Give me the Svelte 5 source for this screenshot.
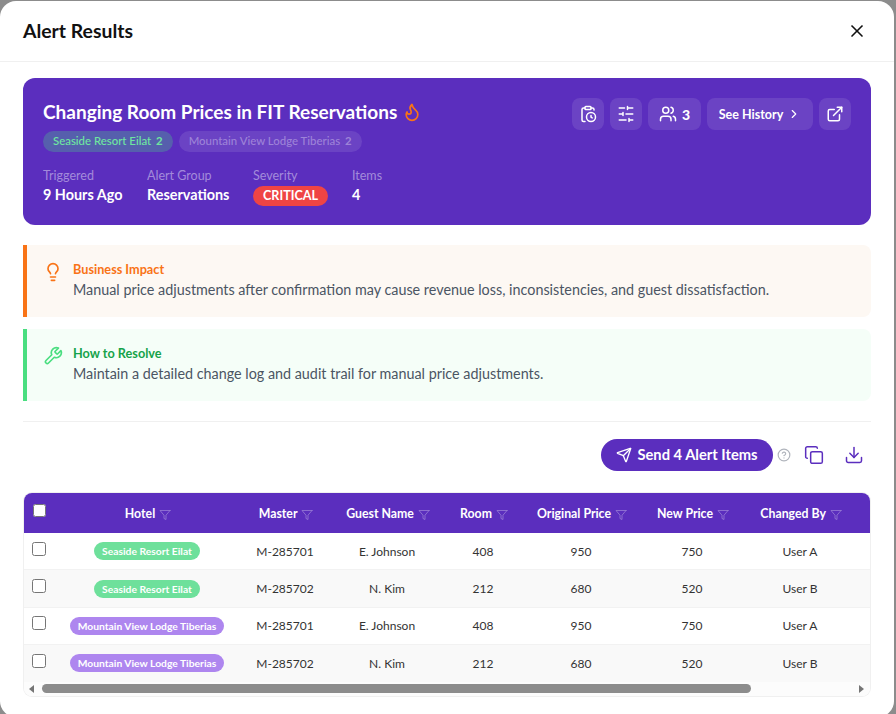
<script>
  const hotels = {
    seaside: { name: 'Seaside Resort Eilat', tone: 'green' },
    mountain: { name: 'Mountain View Lodge Tiberias', tone: 'violet' }
  };

  const columns = ['Hotel', 'Master', 'Guest Name', 'Room', 'Original Price', 'New Price', 'Changed By'];

  const rows = [
    { hotel: hotels.seaside, master: 'M-285701', guest: 'E. Johnson', room: 408, was: 950, now: 750, user: 'User A' },
    { hotel: hotels.seaside, master: 'M-285702', guest: 'N. Kim', room: 212, was: 680, now: 520, user: 'User B' },
    { hotel: hotels.mountain, master: 'M-285701', guest: 'E. Johnson', room: 408, was: 950, now: 750, user: 'User A' },
    { hotel: hotels.mountain, master: 'M-285702', guest: 'N. Kim', room: 212, was: 680, now: 520, user: 'User B' }
  ];

  const meta = [
    { label: 'Triggered', value: '9 Hours Ago' },
    { label: 'Alert Group', value: 'Reservations' },
    { label: 'Severity', badge: 'CRITICAL' },
    { label: 'Items', value: '4' }
  ];
</script>

<div class="backdrop">
  <div class="modal">
    <header class="modal-head">
      <h2>Alert Results</h2>
      <button class="close" aria-label="Close">
        <svg viewBox="0 0 24 24" width="20" height="20"><path d="M18 6 6 18" /><path d="m6 6 12 12" /></svg>
      </button>
    </header>

    <div class="modal-body">
      <section class="hero">
        <div class="hero-main">
          <h1>
            Changing Room Prices in FIT Reservations
            <svg class="flame" viewBox="0 0 24 24" width="20" height="20"><path d="M8.5 14.5A2.5 2.5 0 0 0 11 12c0-1.38-.5-2-1-3-1.072-2.143-.224-4.054 2-6 .5 2.5 2 4.9 4 6.5 2 1.6 3 3.5 3 5.5a7 7 0 1 1-14 0c0-1.153.433-2.294 1-3a2.5 2.5 0 0 0 2.5 2.5z" /></svg>
          </h1>
          <div class="chips">
            <span class="chip on">Seaside Resort Eilat <b>2</b></span>
            <span class="chip">Mountain View Lodge Tiberias <b>2</b></span>
          </div>
          <dl class="meta">
            {#each meta as item}
              <div>
                <dt>{item.label}</dt>
                <dd>
                  {#if item.badge}
                    <span class="badge">{item.badge}</span>
                  {:else}
                    {item.value}
                  {/if}
                </dd>
              </div>
            {/each}
          </dl>
        </div>

        <div class="hero-actions">
          <button class="ghost square" aria-label="Schedule">
            <svg viewBox="0 0 24 24" width="18" height="18"><path d="M16 14v2.2l1.6 1" /><path d="M16 4h2a2 2 0 0 1 2 2v.832" /><path d="M8 4H6a2 2 0 0 0-2 2v14a2 2 0 0 0 2 2h2" /><circle cx="16" cy="16" r="6" /><rect x="8" y="2" width="8" height="4" rx="1" /></svg>
          </button>
          <button class="ghost square" aria-label="Settings">
            <svg viewBox="0 0 24 24" width="18" height="18"><path d="M21 4h-7M10 4H3M21 12h-9M8 12H3M21 20h-5M12 20H3M14 2v4M8 10v4M16 18v4" /></svg>
          </button>
          <button class="ghost users" aria-label="Recipients">
            <svg viewBox="0 0 24 24" width="18" height="18"><path d="M16 21v-2a4 4 0 0 0-4-4H6a4 4 0 0 0-4 4v2" /><circle cx="9" cy="7" r="4" /><path d="M16 3.128a4 4 0 0 1 0 7.744" /><path d="M22 21v-2a4 4 0 0 0-3-3.87" /></svg>
            <span>3</span>
          </button>
          <button class="ghost history">
            See History
            <svg viewBox="0 0 24 24" width="14" height="14"><path d="m9 18 6-6-6-6" /></svg>
          </button>
          <button class="ghost square" aria-label="Open">
            <svg viewBox="0 0 24 24" width="18" height="18"><path d="M15 3h6v6" /><path d="M10 14 21 3" /><path d="M18 13v6a2 2 0 0 1-2 2H5a2 2 0 0 1-2-2V8a2 2 0 0 1 2-2h6" /></svg>
          </button>
        </div>
      </section>

      <section class="note impact">
        <svg viewBox="0 0 24 24" width="20" height="20"><path d="M15 14c.2-1 .7-1.7 1.5-2.5 1-.9 1.5-2.2 1.5-3.5A6 6 0 0 0 6 8c0 1 .2 2.2 1.5 3.5.7.7 1.3 1.5 1.5 2.5" /><path d="M9 18h6" /><path d="M10 22h4" /></svg>
        <div>
          <h3>Business Impact</h3>
          <p>Manual price adjustments after confirmation may cause revenue loss, inconsistencies, and guest dissatisfaction.</p>
        </div>
      </section>

      <section class="note resolve">
        <svg viewBox="0 0 24 24" width="20" height="20"><path d="M14.7 6.3a1 1 0 0 0 0 1.4l1.6 1.6a1 1 0 0 0 1.4 0l3.77-3.77a6 6 0 0 1-7.94 7.94l-6.91 6.91a2.12 2.12 0 0 1-3-3l6.91-6.91a6 6 0 0 1 7.94-7.94l-3.76 3.76z" /></svg>
        <div>
          <h3>How to Resolve</h3>
          <p>Maintain a detailed change log and audit trail for manual price adjustments.</p>
        </div>
      </section>

      <hr />

      <div class="toolbar">
        <button class="send">
          <svg viewBox="0 0 24 24" width="16" height="16"><path d="M14.536 21.686a.5.5 0 0 0 .937-.024l6.5-19a.496.496 0 0 0-.635-.635l-19 6.5a.5.5 0 0 0-.024.937l7.93 3.18a2 2 0 0 1 1.112 1.11z" /><path d="m21.854 2.147-10.94 10.939" /></svg>
          <span>Send 4 Alert Items</span>
        </button>
        <svg class="help" viewBox="0 0 24 24" width="14" height="14"><circle cx="12" cy="12" r="10" /><path d="M9.09 9a3 3 0 0 1 5.83 1c0 2-3 3-3 3" /><path d="M12 17h.01" /></svg>
        <button class="tool copy" aria-label="Copy">
          <svg viewBox="0 0 24 24" width="20" height="20"><rect x="8" y="8" width="14" height="14" rx="2" /><path d="M4 16c-1.1 0-2-.9-2-2V4c0-1.1.9-2 2-2h10c1.1 0 2 .9 2 2" /></svg>
        </button>
        <button class="tool" aria-label="Download">
          <svg viewBox="0 0 24 24" width="20" height="20"><path d="M21 15v4a2 2 0 0 1-2 2H5a2 2 0 0 1-2-2v-4" /><path d="m7 10 5 5 5-5" /><path d="M12 15V3" /></svg>
        </button>
      </div>

      <div class="table-wrap">
        <table>
          <colgroup>
            <col style="width: 30px" /><col style="width: 186px" /><col style="width: 90px" /><col style="width: 114px" />
            <col style="width: 78px" /><col style="width: 118px" /><col style="width: 104px" /><col style="width: 112px" /><col />
          </colgroup>
          <thead>
            <tr>
              <th class="check"><input type="checkbox" aria-label="Select all" /></th>
              {#each columns as col}
                <th>
                  {col}
                  <svg viewBox="0 0 24 24" width="12" height="12"><path d="M22 3H2l8 9.46V19l4 2v-8.54L22 3z" /></svg>
                </th>
              {/each}
              <th></th>
            </tr>
          </thead>
          <tbody>
            {#each rows as row}
              <tr>
                <td class="check"><input type="checkbox" aria-label="Select row" /></td>
                <td><span class="pill {row.hotel.tone}">{row.hotel.name}</span></td>
                <td>{row.master}</td>
                <td>{row.guest}</td>
                <td>{row.room}</td>
                <td>{row.was}</td>
                <td>{row.now}</td>
                <td>{row.user}</td>
                <td></td>
              </tr>
            {/each}
          </tbody>
        </table>
        <div class="scrollbar">
          <span class="arrow left"></span>
          <span class="track"><span class="thumb"></span></span>
          <span class="arrow right"></span>
        </div>
      </div>
    </div>
  </div>
</div>

<style>
  :global(body) {
    margin: 0;
    background: #8c8c8c;
    overflow: hidden;
  }

  .backdrop {
    height: 714px;
    overflow: hidden;
    padding-top: 1px;
    box-sizing: border-box;
    font-family: 'Lato', 'Open Sans', sans-serif;
    color: #1f2937;
  }

  .modal {
    width: 894px;
    height: 716px;
    background: #fff;
    border-radius: 16px;
    overflow: hidden;
  }

  svg {
    fill: none;
    stroke: currentColor;
    stroke-width: 2;
    stroke-linecap: round;
    stroke-linejoin: round;
    flex: none;
    display: block;
  }

  button {
    font-family: inherit;
    border: none;
    background: none;
    padding: 0;
    cursor: pointer;
    color: inherit;
  }

  .modal-head {
    height: 60px;
    display: flex;
    align-items: center;
    justify-content: space-between;
    padding: 0 27px 0 23px;
    border-bottom: 1px solid #f0f0f0;
  }

  h2 {
    margin: -2px 0 0;
    font-size: 19.4px;
    font-weight: 700;
    color: #111;
  }

  .close {
    color: #111;
  }

  .modal-body {
    padding: 16px 23px 0;
  }

  .hero {
    height: 147px;
    box-sizing: border-box;
    padding: 20px;
    display: flex;
    justify-content: space-between;
    background: #5b2ebe;
    border-radius: 12px;
    color: #fff;
  }

  h1 {
    margin: 3px 0 0;
    display: flex;
    align-items: center;
    gap: 5px;
    font-size: 19px;
    line-height: 22px;
    font-weight: 700;
  }

  .flame {
    color: #f97316;
  }

  .chips {
    display: flex;
    gap: 6px;
    margin-top: 8px;
  }

  .chip {
    height: 21px;
    line-height: 20px;
    padding: 0 10px;
    border-radius: 11px;
    font-size: 11.4px;
    font-weight: 500;
    background: rgba(255, 255, 255, 0.1);
    color: rgba(255, 255, 255, 0.35);
  }

  .chip b {
    margin-left: 2px;
    font-weight: 700;
  }

  .chip.on {
    background: rgba(74, 222, 128, 0.28);
    color: #6ee7a0;
  }

  .meta {
    display: grid;
    grid-template-columns: 104px 106px 99px auto;
    margin: 15px 0 0;
  }

  dt {
    font-size: 12.5px;
    line-height: 18px;
    color: rgba(255, 255, 255, 0.45);
  }

  dd {
    margin: 1px 0 0;
    height: 20px;
    line-height: 18px;
    font-size: 14.4px;
    font-weight: 700;
  }

  .badge {
    display: inline-block;
    vertical-align: top;
    height: 20px;
    line-height: 20px;
    padding: 0 10px;
    border-radius: 10px;
    background: #ef4444;
    font-size: 12.6px;
  }

  .hero-actions {
    display: flex;
    gap: 6px;
  }

  .ghost {
    height: 32px;
    display: flex;
    align-items: center;
    justify-content: center;
    border-radius: 8px;
    background: rgba(255, 255, 255, 0.1);
    color: #fff;
  }

  .square {
    width: 32px;
  }

  .users {
    width: 53px;
    gap: 5px;
    font-size: 14px;
    font-weight: 900;
  }

  .history {
    width: 106px;
    gap: 4px;
    font-size: 12.5px;
    font-weight: 700;
  }

  .note {
    height: 72px;
    box-sizing: border-box;
    display: flex;
    gap: 10px;
    padding: 16px;
    border-left: 4px solid;
    border-radius: 0 8px 8px 0;
    margin-top: 12px;
  }

  .note svg {
    margin-top: 1px;
  }

  .impact {
    margin-top: 20px;
    background: #fdf8f3;
    border-color: #f97316;
  }

  .impact svg,
  .impact h3 {
    color: #f97316;
  }

  .resolve {
    background: #f5fef8;
    border-color: #4ade80;
  }

  .resolve svg {
    color: #4ade80;
  }

  .resolve h3 {
    color: #16a34a;
  }

  h3 {
    margin: 0;
    font-size: 12.7px;
    line-height: 16px;
    font-weight: 700;
  }

  p {
    margin: 3px 0 0;
    font-size: 14.35px;
    line-height: 20px;
    color: #4b5563;
  }

  hr {
    border: none;
    border-top: 1px solid #f0f0f0;
    margin: 20px 0 0;
  }

  .toolbar {
    height: 32px;
    margin: 17px 7px 22px 0;
    display: flex;
    align-items: center;
    justify-content: flex-end;
  }

  .send {
    width: 172px;
    height: 32px;
    display: flex;
    align-items: center;
    justify-content: center;
    gap: 5px;
    border-radius: 16px;
    background: #5b2ebe;
    color: #fff;
    font-size: 14.7px;
    font-weight: 700;
  }

  .send span {
    padding-bottom: 2px;
  }

  .help {
    margin-left: 4px;
    color: #b0b4bc;
  }

  .tool {
    color: #5b2ebe;
  }

  .tool svg {
    stroke-width: 1.8;
  }

  .copy {
    margin: 0 20px 0 13px;
  }

  .table-wrap {
    margin: 0 1px;
    border-radius: 8px;
    overflow: hidden;
    box-shadow: 0 0 0 1px #f0f0f0;
  }

  table {
    width: 100%;
    table-layout: fixed;
    border-collapse: collapse;
  }

  th {
    height: 40px;
    padding: 0 0 0 2px;
    background: #5b2ebe;
    color: #fff;
    font-size: 12.3px;
    font-weight: 700;
    text-align: center;
  }

  th svg {
    display: inline-block;
    vertical-align: -3px;
    margin-left: 1px;
    stroke-width: 1.5;
    opacity: 0.4;
  }

  th.check {
    padding: 0;
  }

  th.check input {
    margin: 0 0 6px 1px;
  }

  td {
    height: 36.4px;
    padding: 0;
    font-size: 12px;
    text-align: center;
    color: #333;
    border-bottom: 1px solid #f2f2f2;
  }

  tbody tr:nth-child(even) td {
    background: #f9f9f9;
  }

  tbody tr:last-child td {
    border-bottom: none;
  }

  td.check input {
    margin: 0 0 5px;
    width: 14px;
    height: 14px;
  }

  .pill {
    display: inline-block;
    padding: 0 8px;
    height: 18px;
    line-height: 18px;
    border-radius: 9px;
    font-size: 10.3px;
    font-weight: 700;
    color: #fff;
  }

  .pill.green {
    background: #6ee09b;
  }

  .pill.violet {
    background: #ae86ef;
  }

  .scrollbar {
    height: 14px;
    display: flex;
    align-items: center;
    background: #fcfcfc;
  }

  .arrow {
    flex: none;
    width: 0;
    height: 0;
    border-top: 4px solid transparent;
    border-bottom: 4px solid transparent;
  }

  .arrow.left {
    margin: 0 8px 0 5px;
    border-right: 5px solid #757575;
  }

  .arrow.right {
    margin: 0 6px 0 7px;
    border-left: 5px solid #757575;
  }

  .track {
    flex: 1;
  }

  .thumb {
    display: block;
    width: 709px;
    height: 9px;
    border-radius: 5px;
    background: #8c8c8c;
  }
</style>
